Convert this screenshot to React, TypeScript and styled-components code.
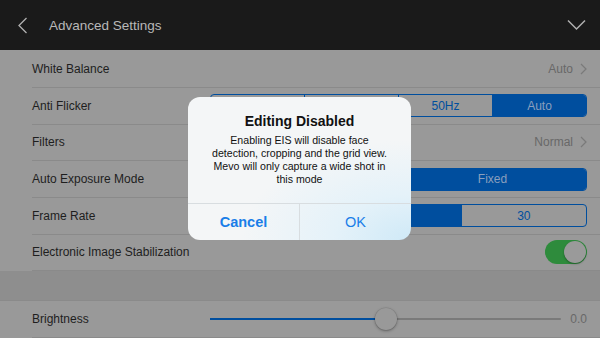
import styled, { createGlobalStyle } from "styled-components";

const GlobalStyle = createGlobalStyle`
  html, body {
    margin: 0;
    padding: 0;
    background: #999999;
    font-family: "Liberation Sans", Arial, sans-serif;
    overflow: hidden;
  }
`;

const Page = styled.div`
  position: relative;
  width: 600px;
  height: 338px;
  overflow: hidden;
  background: #999999;
`;

const Header = styled.div`
  height: 50px;
  background: #1a1a1a;
  display: flex;
  align-items: center;
  padding: 0 14px 0 17px;
`;

const HeaderTitle = styled.div`
  flex: 1;
  margin-left: 21px;
  font-size: 13.5px;
  color: #b8b8b8;
`;

const IconButton = styled.div`
  display: flex;
  align-items: center;
  justify-content: center;
`;

const List = styled.div`
  display: flex;
  flex-direction: column;
`;

const Row = styled.div<{ $h?: number }>`
  height: ${(p) => p.$h ?? 36.67}px;
  box-sizing: border-box;
  margin-left: 32px;
  padding-right: 13px;
  border-bottom: 1px solid #8a8a8a;
  display: flex;
  align-items: center;
`;

const Label = styled.div`
  width: 178px;
  font-size: 12px;
  color: #1e1e1e;
  white-space: nowrap;
`;

const Control = styled.div`
  flex: 1;
  display: flex;
  align-items: center;
  justify-content: flex-end;
`;

const Value = styled.span`
  font-size: 12px;
  color: #686868;
  margin-right: 7px;
`;

const Segmented = styled.div`
  flex: 1;
  height: 23px;
  display: flex;
  border: 1px solid #004e9e;
  border-radius: 4px;
  overflow: hidden;
  box-sizing: border-box;
`;

const Segment = styled.div<{ $on?: boolean }>`
  flex: 1;
  display: flex;
  align-items: center;
  justify-content: center;
  font-size: 12px;
  background: ${(p) => (p.$on ? "#004e9e" : "transparent")};
  color: ${(p) => (p.$on ? "#8a9fbd" : "#004e9e")};
  & + & {
    border-left: 1px solid #004e9e;
  }
`;

const Switch = styled.div`
  width: 42px;
  height: 24px;
  border-radius: 12px;
  background: #2e8b3c;
  position: relative;
`;

const Knob = styled.div`
  position: absolute;
  right: 1px;
  top: 1px;
  width: 22px;
  height: 22px;
  border-radius: 50%;
  background: #9a9a9a;
  box-shadow: 0 1px 2px rgba(0, 0, 0, 0.35);
`;

const Gap = styled.div`
  height: 30px;
  background: #8e8e8e;
  border-bottom: 1px solid #8a8a8a;
  box-sizing: border-box;
`;

const Slider = styled.div`
  flex: 1;
  position: relative;
  height: 24px;
  display: flex;
  align-items: center;
  margin-right: 9px;
`;

const Track = styled.div`
  flex: 1;
  height: 2px;
  background: #7a7a7a;
  border-radius: 1px;
`;

const Fill = styled.div`
  position: absolute;
  left: 0;
  top: 11px;
  height: 2px;
  background: #004e9e;
`;

const Thumb = styled.div`
  position: absolute;
  top: 1px;
  width: 22px;
  height: 22px;
  margin-left: -11px;
  border-radius: 50%;
  background: #999999;
  box-shadow: 0 1px 3px rgba(0, 0, 0, 0.35), 0 0 0 0.5px rgba(0, 0, 0, 0.1);
`;

const SliderValue = styled.span`
  font-size: 12px;
  color: #686868;
`;

const Dialog = styled.div`
  position: absolute;
  left: 188px;
  top: 97px;
  width: 223px;
  border-radius: 12px;
  overflow: hidden;
  background: radial-gradient(
      ellipse 170px 100px at 100% 100%,
      #cfe9f7 0%,
      rgba(222, 240, 250, 0.7) 45%,
      rgba(244, 246, 247, 0) 100%
    ),
    #f4f6f7;
  display: flex;
  flex-direction: column;
`;

const DialogBody = styled.div`
  padding: 16px 10px 17px;
  text-align: center;
  color: #111;
`;

const DialogTitle = styled.div`
  font-size: 14px;
  font-weight: bold;
  line-height: 17px;
  margin-bottom: 4px;
`;

const DialogText = styled.div`
  font-size: 10.6px;
  line-height: 13px;
`;

const DialogActions = styled.div`
  display: flex;
  height: 36px;
  border-top: 1px solid #d8dde0;
`;

const DialogButton = styled.div<{ $bold?: boolean }>`
  flex: 1;
  display: flex;
  align-items: center;
  justify-content: center;
  font-size: 14.5px;
  color: #1a7ee8;
  font-weight: ${(p) => (p.$bold ? "bold" : "normal")};
  & + & {
    border-left: 1px solid #d8dde0;
  }
`;

const Chevron = () => (
  <svg width="7" height="12" viewBox="0 0 7 12">
    <path d="M1 1 L6 6 L1 11" fill="none" stroke="#7a7a7a" strokeWidth="1.2" />
  </svg>
);

function App() {
  const brightness = 0.5;
  return (
    <Page>
      <GlobalStyle />
      <Header>
        <IconButton>
          <svg width="11" height="17" viewBox="0 0 11 17">
            <path d="M9.5 1 L2 8.5 L9.5 16" fill="none" stroke="#b0b0b0" strokeWidth="1.3" />
          </svg>
        </IconButton>
        <HeaderTitle>Advanced Settings</HeaderTitle>
        <IconButton>
          <svg width="19" height="12" viewBox="0 0 19 12">
            <path d="M1 1.5 L9.5 10 L18 1.5" fill="none" stroke="#b0b0b0" strokeWidth="1.5" />
          </svg>
        </IconButton>
      </Header>
      <List>
        <Row $h={38}>
          <Label>White Balance</Label>
          <Control>
            <Value>Auto</Value>
            <Chevron />
          </Control>
        </Row>
        <Row>
          <Label>Anti Flicker</Label>
          <Segmented>
            <Segment>Off</Segment>
            <Segment>60Hz</Segment>
            <Segment>50Hz</Segment>
            <Segment $on>Auto</Segment>
          </Segmented>
        </Row>
        <Row>
          <Label>Filters</Label>
          <Control>
            <Value>Normal</Value>
            <Chevron />
          </Control>
        </Row>
        <Row>
          <Label>Auto Exposure Mode</Label>
          <Segmented>
            <Segment $on />
            <Segment $on>Fixed</Segment>
          </Segmented>
        </Row>
        <Row>
          <Label>Frame Rate</Label>
          <Segmented>
            <Segment>24</Segment>
            <Segment $on>25</Segment>
            <Segment>30</Segment>
          </Segmented>
        </Row>
        <Row>
          <Label>Electronic Image Stabilization</Label>
          <Control>
            <Switch>
              <Knob />
            </Switch>
          </Control>
        </Row>
      </List>
      <Gap />
      <List>
        <Row $h={37}>
          <Label>Brightness</Label>
          <Slider>
            <Track />
            <Fill style={{ width: `${brightness * 100}%` }} />
            <Thumb style={{ left: `${brightness * 100}%` }} />
          </Slider>
          <SliderValue>0.0</SliderValue>
        </Row>
      </List>
      <Dialog>
        <DialogBody>
          <DialogTitle>Editing Disabled</DialogTitle>
          <DialogText>
            Enabling EIS will disable face
            <br />
            detection, cropping and the grid view.
            <br />
            Mevo will only capture a wide shot in
            <br />
            this mode
          </DialogText>
        </DialogBody>
        <DialogActions>
          <DialogButton $bold>Cancel</DialogButton>
          <DialogButton>OK</DialogButton>
        </DialogActions>
      </Dialog>
    </Page>
  );
}

export default App;
